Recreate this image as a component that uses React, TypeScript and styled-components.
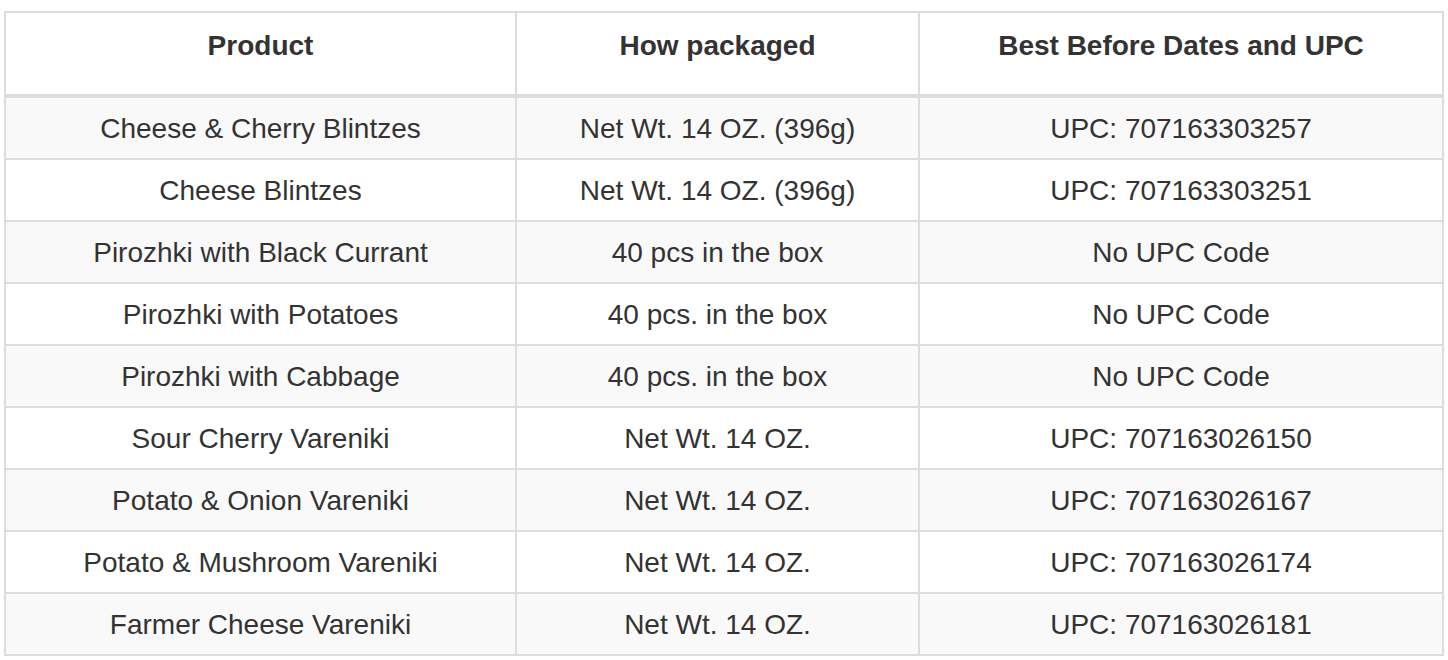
import React from "react";
import styled, { createGlobalStyle } from "styled-components";

const GlobalStyle = createGlobalStyle`
  html, body {
    margin: 0;
    padding: 0;
    background: #ffffff;
  }
  body {
    font-family: "Liberation Sans", Arial, Helvetica, sans-serif;
    color: #333333;
  }
`;

const Page = styled.div`
  padding: 11px 0 0 4px;
`;

const Table = styled.table`
  border-collapse: separate;
  border-spacing: 0;
  table-layout: fixed;
  width: 1440px;
  border-top: 2px solid #dddddd;
  border-left: 2px solid #dddddd;
  font-size: 28px;
  line-height: 40px;
  color: #333333;
`;

const Col = styled.col<{ $w: number }>`
  width: ${(p) => p.$w}px;
`;

const HeadCell = styled.th`
  box-sizing: border-box;
  padding: 13px 16px 28px;
  font-weight: 700;
  text-align: center;
  vertical-align: top;
  border-right: 2px solid #dddddd;
  border-bottom: 4px solid #dddddd;
  white-space: nowrap;
`;

const Row = styled.tr<{ $striped: boolean }>`
  background: ${(p) => (p.$striped ? "#f9f9f9" : "#ffffff")};
`;

const Cell = styled.td`
  box-sizing: border-box;
  padding: 11px 16px 9px;
  text-align: center;
  vertical-align: middle;
  border-right: 2px solid #dddddd;
  border-bottom: 2px solid #dddddd;
  white-space: nowrap;
`;

const rows: [string, string, string][] = [
  ["Cheese & Cherry Blintzes", "Net Wt. 14 OZ. (396g)", "UPC: 707163303257"],
  ["Cheese Blintzes", "Net Wt. 14 OZ. (396g)", "UPC: 707163303251"],
  ["Pirozhki with Black Currant", "40 pcs in the box", "No UPC Code"],
  ["Pirozhki with Potatoes", "40 pcs. in the box", "No UPC Code"],
  ["Pirozhki with Cabbage", "40 pcs. in the box", "No UPC Code"],
  ["Sour Cherry Vareniki", "Net Wt. 14 OZ.", "UPC: 707163026150"],
  ["Potato & Onion Vareniki", "Net Wt. 14 OZ.", "UPC: 707163026167"],
  ["Potato & Mushroom Vareniki", "Net Wt. 14 OZ.", "UPC: 707163026174"],
  ["Farmer Cheese Vareniki", "Net Wt. 14 OZ.", "UPC: 707163026181"],
];

export default function App() {
  return (
    <>
      <GlobalStyle />
      <Page>
        <Table>
          <colgroup>
            <Col $w={511} />
            <Col $w={403} />
            <Col $w={524} />
          </colgroup>
          <thead>
            <tr>
              <HeadCell>Product</HeadCell>
              <HeadCell>How packaged</HeadCell>
              <HeadCell>Best Before Dates and UPC</HeadCell>
            </tr>
          </thead>
          <tbody>
            {rows.map((r, i) => (
              <Row key={r[0]} $striped={i % 2 === 0}>
                <Cell>{r[0]}</Cell>
                <Cell>{r[1]}</Cell>
                <Cell>{r[2]}</Cell>
              </Row>
            ))}
          </tbody>
        </Table>
      </Page>
    </>
  );
}
